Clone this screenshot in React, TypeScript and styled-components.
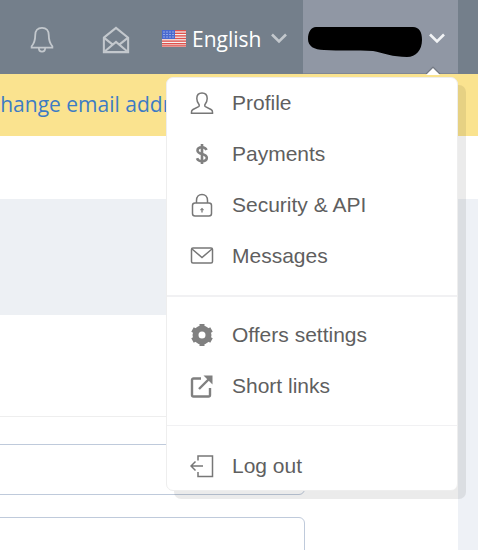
import React from 'react';
import styled, { createGlobalStyle } from 'styled-components';

const GlobalStyle = createGlobalStyle`
  html, body {
    margin: 0;
    padding: 0;
    background: #fff;
    overflow: hidden;
  }
`;

const Page = styled.div`
  position: relative;
  width: 478px;
  height: 550px;
  overflow: hidden;
  font-family: "Open Sans", "Noto Sans", sans-serif;
`;

const Header = styled.header`
  display: flex;
  align-items: stretch;
  height: 74px;
  background: #747f8b;
`;

const HeaderLeft = styled.div`
  display: flex;
  align-items: center;
  width: 303px;
  padding: 3px 0 0 30px;
  box-sizing: border-box;
`;

const BellSlot = styled.div`
  display: flex;
  width: 72px;
  margin-top: 2px;
`;

const MailSlot = styled.div`
  display: flex;
  width: 60px;
  margin-top: 2px;
`;

const LangLabel = styled.span`
  margin: 0 9px 0 6px;
  font-size: 21px;
  line-height: 28px;
  color: #fff;
`;

const LangChevron = styled.span`
  display: block;
  margin-top: -1px;
`;

const UserCell = styled.div`
  display: flex;
  align-items: center;
  width: 155px;
  padding: 9px 0 0 3px;
  box-sizing: border-box;
  background: #9097a4;
  box-shadow: inset 0 -1px 0 #808794;
`;

const UserChevron = styled.span`
  display: block;
  margin: -8px 0 0 4px;
`;

const Banner = styled.div`
  display: flex;
  align-items: center;
  height: 62px;
  background: #fae38f;
  overflow: hidden;
  white-space: nowrap;
`;

const BannerLink = styled.a`
  margin-left: -13px;
  padding-bottom: 2px;
  font-size: 21px;
  color: #3d7cc4;
`;

const Body = styled.div`
  display: flex;
  height: 414px;
`;

const Main = styled.main`
  display: flex;
  flex-direction: column;
  width: 458px;
`;

const Aside = styled.div`
  flex: 1;
  margin-top: 63px;
  background: #eef1f6;
`;

const TopSpacer = styled.div`
  flex: none;
  height: 63px;
`;

const GreyBand = styled.section`
  flex: none;
  height: 116px;
  background: #edf0f4;
`;

const Rule = styled.div`
  flex: none;
  height: 1px;
  margin-top: 101px;
  background: #eeeeee;
`;

const Field = styled.div<{ $top: number; $height: number }>`
  flex: none;
  width: 311px;
  height: ${p => p.$height}px;
  margin-top: ${p => p.$top}px;
  margin-left: -6px;
  box-sizing: border-box;
  border: 1px solid #bfcadb;
  border-radius: 6px;
  background: #fff;
`;

const Menu = styled.nav`
  position: absolute;
  left: 166px;
  top: 77px;
  width: 292px;
  height: 414px;
  box-sizing: border-box;
  border: 1px solid #eeeeee;
  border-radius: 7px;
  background: #fff;
  box-shadow: 8px 8px 0 rgba(0, 0, 0, 0.08);
  font-family: "Liberation Sans", Arial, sans-serif;

  &::before {
    content: "";
    position: absolute;
    right: 19px;
    top: -8px;
    width: 10px;
    height: 10px;
    background: #fff;
    box-shadow: -1px -1px 1px rgba(0, 0, 0, 0.25);
    transform: rotate(45deg);
    clip-path: polygon(-20% -20%, 120% -20%, 100% 0, 0 100%, -20% 120%);
  }
`;

const TopGroup = styled.div`
  padding-bottom: 13px;
  border-bottom: 2px solid #f1f1f3;
`;

const MiddleGroup = styled.div`
  padding: 13px 0 13px;
  border-bottom: 1px solid #f1f1f3;
`;

const LastGroup = styled.div`
  padding-top: 15px;
`;

const MenuRow = styled.a`
  display: flex;
  align-items: center;
  height: 49px;
  padding: 0 0 2px 22px;
  font-size: 21px;
  color: #5f5f5f;
`;

const IconBox = styled.span`
  display: flex;
  align-items: center;
  justify-content: center;
  width: 26px;
  height: 26px;
  margin-right: 17px;
`;

const icon = { width: 24, height: 24, viewBox: '0 0 24 24', fill: 'none' };

const ChevronIcon = ({ color }: { color: string }) => (
  <svg width="18" height="12" viewBox="0 0 18 12" fill="none" style={{ display: 'block' }}>
    <path d="M2 2.500l7 7 7-7" stroke={color} strokeWidth="2.600" />
  </svg>
);

const Bell = () => (
  <svg width="24" height="27" viewBox="0 0 26 30" fill="none" stroke="#c3c8cd" strokeWidth="2">
    <path d="M13 2c-5 0-7.500 3.500-7.500 8 0 6-1 9-4 12.500v1.500h23v-1.500c-3-3.500-4-6.500-4-12.500 0-4.500-2.500-8-7.500-8z" />
    <path d="M9.500 24.500c0 2.500 1.500 4 3.500 4s3.500-1.500 3.500-4" />
  </svg>
);

const OpenMail = () => (
  <svg width="28" height="28" viewBox="0 0 30 30" fill="none" stroke="#c3c8cd" strokeWidth="2.200">
    <path d="M2 12.500L15 2l13 10.500V28H2z" />
    <path d="M2 12.500L11.500 20M28 12.500L18.500 20M2.500 27.500L15 17l12.500 10.500" />
  </svg>
);

const Flag = () => (
  <svg width="24" height="17" viewBox="0 0 24 17" style={{ display: 'block' }}>
    <rect width="24" height="17" fill="#f4f4f4" />
    {[0, 2.6, 5.2, 7.8, 10.4, 13, 15.2].map(y => (
      <rect key={y} y={y} width="24" height="1.400" fill="#e0524c" />
    ))}
    <rect width="13" height="9" fill="#4a6ad0" />
    {[2, 5, 8, 11].map(x => [2, 4.5, 7].map(y => (
      <rect key={`${x}-${y}`} x={x - 0.5} y={y - 0.5} width="1" height="1" fill="#dfe6fa" />
    )))}
  </svg>
);

const Scribble = () => (
  <svg width="118" height="32" viewBox="0 0 118 32" style={{ display: 'block' }}>
    <path d="M10 1h97c6 0 9 5 9 13 0 10-6 17-15 17-14 0-24-4-34-6-16-1-34 0-49-1-10 0-16-4-16-11C2 6 5 1 10 1z" fill="#000" />
  </svg>
);

const ProfileIcon = () => (
  <svg {...icon} stroke="#777" strokeWidth="1.500">
    <path d="M12 2c-3.400 0-5.200 2.500-5.200 5.500 0 2.500 1 4.500 2.200 6 .4.600.3 1.800-.4 2.200L3 18.500c-1 .5-1.500 1.300-1.500 2.500v1.300h21V21c0-1.200-.5-2-1.500-2.500l-5.600-2.800c-.7-.4-.8-1.600-.4-2.200 1.200-1.500 2.200-3.500 2.200-6C17.200 4.500 15.400 2 12 2z" />
  </svg>
);

const DollarIcon = () => (
  <svg {...icon} stroke="#808080" strokeWidth="2.600">
    <path d="M16.500 8c-.7-1.800-2.400-2.800-4.500-2.800-2.700 0-4.500 1.300-4.500 3.300 0 4.600 9.300 2.600 9.300 7.300 0 2.100-1.900 3.400-4.800 3.400-2.500 0-4.200-1-5-3" />
    <path d="M12 2v20" />
  </svg>
);

const LockIcon = () => (
  <svg {...icon} stroke="#777" strokeWidth="1.500">
    <rect x="2.500" y="10" width="19" height="13" rx="2.500" />
    <path d="M6.500 10V7.500C6.500 3.800 8.800 1.500 12 1.500s5.500 2.300 5.500 6V10" />
    <path d="M12 19.500v-3.500" strokeWidth="1.300" />
    <path d="M10.500 17.200L12 15.500l1.500 1.700" strokeWidth="1.100" />
  </svg>
);

const EnvelopeIcon = () => (
  <svg {...icon} stroke="#777" strokeWidth="1.500">
    <rect x="1.500" y="4" width="21" height="15" rx="1.500" />
    <path d="M2 5l10 8.500L22 5" />
  </svg>
);

const GearIcon = () => (
  <svg {...icon} fill="none">
    <circle cx="12" cy="12" r="6.500" stroke="#808080" strokeWidth="6" />
    <path
      d="M12 1v4M12 19v4M2.500 6.500l3.500 2M18 15.500l3.500 2M2.500 17.500l3.500-2M18 8.500l3.500-2"
      stroke="#808080"
      strokeWidth="5"
    />
    <circle cx="12" cy="12" r="2.600" fill="#fff" />
  </svg>
);

const ExternalIcon = () => (
  <svg {...icon} stroke="#808080" strokeWidth="2.400">
    <path d="M11 4.500H3.500c-.8 0-1.500.7-1.500 1.500v15c0 .8.700 1.500 1.500 1.500h15c.8 0 1.500-.7 1.500-1.500v-7" />
    <path d="M9 15L20 4" />
    <path d="M13.500 1.500H22.500V10.500z" fill="#808080" stroke="none" />
  </svg>
);

const LogoutIcon = () => (
  <svg {...icon} stroke="#777" strokeWidth="1.500">
    <path d="M8 6.500V2h14.500v20.500H8V18" />
    <path d="M1 12h12M5.500 7.500L1 12l4.500 4.500" />
  </svg>
);

const primaryItems = [
  { label: 'Profile', Icon: ProfileIcon },
  { label: 'Payments', Icon: DollarIcon },
  { label: 'Security & API', Icon: LockIcon },
  { label: 'Messages', Icon: EnvelopeIcon },
];

const secondaryItems = [
  { label: 'Offers settings', Icon: GearIcon },
  { label: 'Short links', Icon: ExternalIcon },
];

const Item = ({ label, Icon }: { label: string; Icon: React.FC }) => (
  <MenuRow>
    <IconBox>
      <Icon />
    </IconBox>
    {label}
  </MenuRow>
);

const App: React.FC = () => (
  <Page>
    <GlobalStyle />
    <Header>
      <HeaderLeft>
        <BellSlot>
          <Bell />
        </BellSlot>
        <MailSlot>
          <OpenMail />
        </MailSlot>
        <Flag />
        <LangLabel>English</LangLabel>
        <LangChevron>
          <ChevronIcon color="#c3c8cd" />
        </LangChevron>
      </HeaderLeft>
      <UserCell>
        <Scribble />
        <UserChevron>
          <ChevronIcon color="#f2f4f6" />
        </UserChevron>
      </UserCell>
    </Header>
    <Banner>
      <BannerLink>Change email address</BannerLink>
    </Banner>
    <Body>
      <Main>
        <TopSpacer />
        <GreyBand />
        <Rule />
        <Field $top={27} $height={51} />
        <Field $top={22} $height={60} />
      </Main>
      <Aside />
    </Body>
    <Menu>
      <TopGroup>
        {primaryItems.map(item => (
          <Item key={item.label} {...item} />
        ))}
      </TopGroup>
      <MiddleGroup>
        {secondaryItems.map(item => (
          <Item key={item.label} {...item} />
        ))}
      </MiddleGroup>
      <LastGroup>
        <Item label="Log out" Icon={LogoutIcon} />
      </LastGroup>
    </Menu>
  </Page>
);

export default App;
